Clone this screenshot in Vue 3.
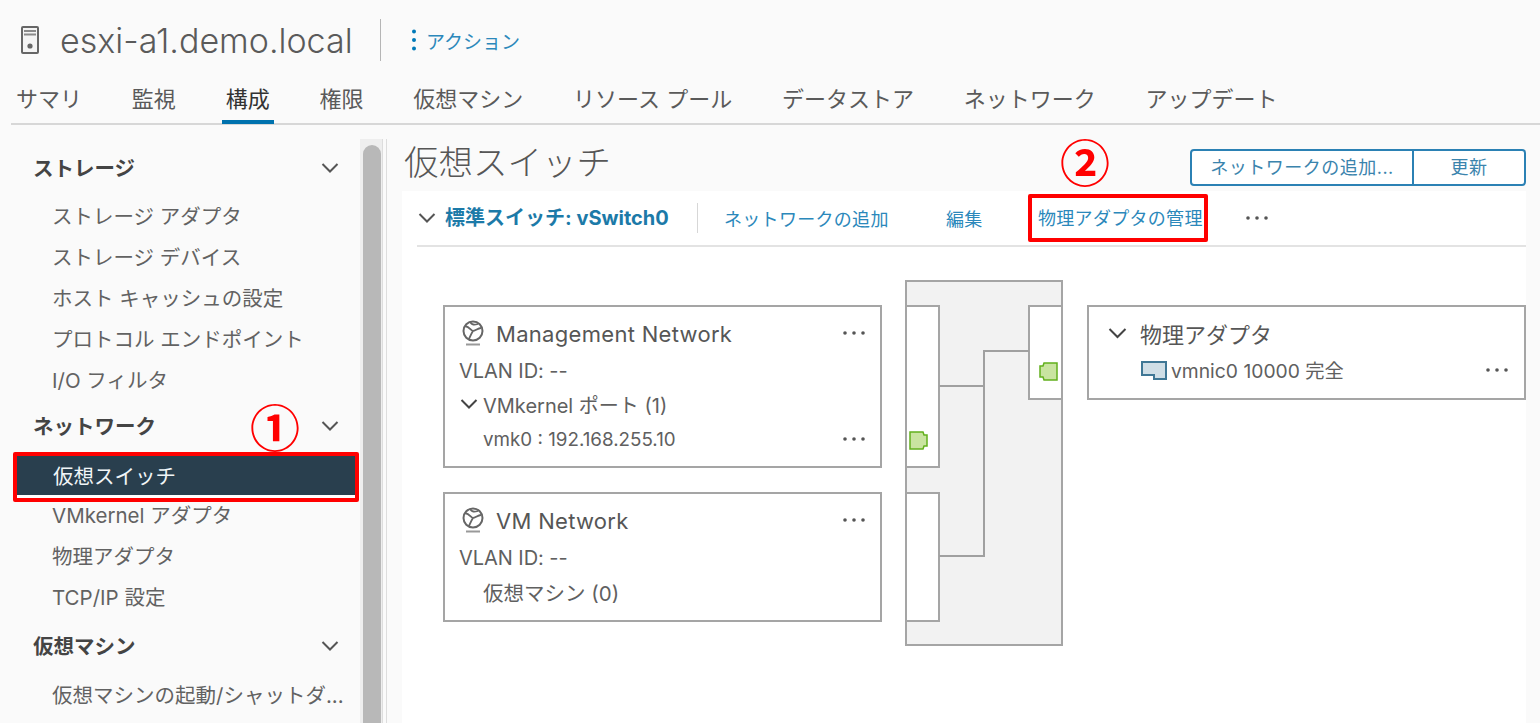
<script setup>
const tabs = ['サマリ', '監視', '構成', '権限', '仮想マシン', 'リソース プール', 'データストア', 'ネットワーク', 'アップデート']
const storage = ['ストレージ アダプタ', 'ストレージ デバイス', 'ホスト キャッシュの設定', 'プロトコル エンドポイント', 'I/O フィルタ']
const network = ['VMkernel アダプタ', '物理アダプタ', 'TCP/IP 設定']
</script>

<template>
  <div class="page">
    <header class="head">
      <svg class="srv" width="18" height="28" viewBox="0 0 18 28"><rect x="1" y="1" width="16" height="26" rx="1" fill="#f4f4f4" stroke="#666" stroke-width="2"/><path d="M3 5h12M3 8.500h12" stroke="#8a8a8a" stroke-width="2"/><circle cx="9" cy="20" r="2.600" fill="#666"/></svg>
      <h1 class="host">esxi-a1.demo.local</h1>
      <span class="vbar"></span>
      <svg class="kebab" width="6" height="24" viewBox="0 0 6 24"><circle cx="3" cy="3.500" r="2" fill="#0079b8"/><circle cx="3" cy="12" r="2" fill="#0079b8"/><circle cx="3" cy="20.500" r="2" fill="#0079b8"/></svg>
      <span class="action">アクション</span>
    </header>

    <nav class="tabs">
      <span v-for="t in tabs" :key="t" class="tab" :class="{ on: t === '構成' }">{{ t }}</span>
    </nav>

    <div class="body">
      <aside class="side">
        <div class="sec first">ストレージ<svg class="chev" width="18" height="10" viewBox="0 0 18 10"><path d="M1.500 1l7.500 7.500L16.500 1" fill="none" stroke="#555" stroke-width="2"/></svg></div>
        <div v-for="s in storage" :key="s" class="item">{{ s }}</div>
        <div class="sec net">ネットワーク<span class="mark one">①</span><svg class="chev" width="18" height="10" viewBox="0 0 18 10"><path d="M1.500 1l7.500 7.500L16.500 1" fill="none" stroke="#555" stroke-width="2"/></svg></div>
        <div class="selbox"><div class="sel">仮想スイッチ</div></div>
        <div v-for="s in network" :key="s" class="item">{{ s }}</div>
        <div class="sec vm">仮想マシン<svg class="chev" width="18" height="10" viewBox="0 0 18 10"><path d="M1.500 1l7.500 7.500L16.500 1" fill="none" stroke="#555" stroke-width="2"/></svg></div>
        <div class="item">仮想マシンの起動/シャットダ...</div>
      </aside>
      <div class="track"><div class="thumb"></div></div>

      <main class="main">
        <div class="top">
          <h2 class="title">仮想スイッチ</h2>
          <span class="mark two">②</span>
          <div class="btns">
            <button class="btn wide">ネットワークの追加...</button>
            <button class="btn">更新</button>
          </div>
        </div>

        <section class="panel">
          <div class="bar">
            <svg class="barchev" width="18" height="10" viewBox="0 0 18 10"><path d="M1.500 1l7.500 7.500L16.500 1" fill="none" stroke="#555" stroke-width="2"/></svg>
            <strong class="sw">標準スイッチ: vSwitch0</strong>
            <span class="vbar2"></span>
            <a class="lk l1">ネットワークの追加</a>
            <a class="lk l2">編集</a>
            <a class="lk boxed">物理アダプタの管理</a>
            <svg class="bardots" width="24" height="6" viewBox="0 0 24 6"><circle cx="3" cy="3" r="1.800" fill="#555"/><circle cx="12" cy="3" r="1.800" fill="#555"/><circle cx="21" cy="3" r="1.800" fill="#555"/></svg>
          </div>

          <div class="diagram">
            <div class="cards">
              <div class="card c1">
                <div class="ctitle">
                  <svg class="globe" width="24" height="26" viewBox="0 0 24 26"><ellipse cx="12" cy="11" rx="9.500" ry="9.500" fill="none" stroke="#666" stroke-width="2"/><path d="M4 6c5 1 6 5 8 5s5-3 8-3M12 11c-2 3-3 6-4 8M9 2c2 3 4 3 8 2" fill="none" stroke="#666" stroke-width="1.800"/><path d="M5 24.500h14" stroke="#999" stroke-width="2"/></svg>
                  <span class="nm">Management Network</span>
                  <svg class="dots" width="24" height="6" viewBox="0 0 24 6"><circle cx="3" cy="3" r="1.800" fill="#555"/><circle cx="12" cy="3" r="1.800" fill="#555"/><circle cx="21" cy="3" r="1.800" fill="#555"/></svg>
                </div>
                <div class="vlan">VLAN ID: --</div>
                <div class="port"><svg width="18" height="10" viewBox="0 0 18 10"><path d="M1.500 1l7.500 7.500L16.500 1" fill="none" stroke="#444" stroke-width="2"/></svg><span>VMkernel ポート (1)</span></div>
                <div class="vmk"><span>vmk0 : 192.168.255.10</span><svg class="dots" width="24" height="6" viewBox="0 0 24 6"><circle cx="3" cy="3" r="1.800" fill="#555"/><circle cx="12" cy="3" r="1.800" fill="#555"/><circle cx="21" cy="3" r="1.800" fill="#555"/></svg></div>
              </div>
              <div class="card c2">
                <div class="ctitle">
                  <svg class="globe" width="24" height="26" viewBox="0 0 24 26"><ellipse cx="12" cy="11" rx="9.500" ry="9.500" fill="none" stroke="#666" stroke-width="2"/><path d="M4 6c5 1 6 5 8 5s5-3 8-3M12 11c-2 3-3 6-4 8M9 2c2 3 4 3 8 2" fill="none" stroke="#666" stroke-width="1.800"/><path d="M5 24.500h14" stroke="#999" stroke-width="2"/></svg>
                  <span class="nm">VM Network</span>
                  <svg class="dots" width="24" height="6" viewBox="0 0 24 6"><circle cx="3" cy="3" r="1.800" fill="#555"/><circle cx="12" cy="3" r="1.800" fill="#555"/><circle cx="21" cy="3" r="1.800" fill="#555"/></svg>
                </div>
                <div class="vlan">VLAN ID: --</div>
                <div class="vms">仮想マシン (0)</div>
              </div>
            </div>

            <div class="switch">
              <div class="slot s1"></div>
              <div class="slot s2"></div>
              <div class="slot s3"></div>
              <svg class="wires" width="158" height="366" viewBox="0 0 158 366"><path d="M34 106h45M34 276h45V71h45" fill="none" stroke="#a0a0a0" stroke-width="2"/></svg>
              <svg class="pg p1" width="19" height="19" viewBox="0 0 19 19"><path d="M1 1h13l1 3h3v11h-3l-1 3H1z" fill="#c9e4a0" stroke="#62b01c" stroke-width="1.500"/></svg>
              <svg class="pg p2" width="19" height="19" viewBox="0 0 19 19"><path d="M18 1H5L4 4H1v11h3l1 3h13z" fill="#c9e4a0" stroke="#62b01c" stroke-width="1.500"/></svg>
            </div>

            <div class="card c3">
              <div class="ctitle pa">
                <svg width="19" height="11" viewBox="0 0 19 11"><path d="M1.500 1l8 8 8-8" fill="none" stroke="#444" stroke-width="2"/></svg>
                <span>物理アダプタ</span>
              </div>
              <div class="nic">
                <svg width="26" height="19" viewBox="0 0 26 19"><path d="M1 1h24v17H13v-4H1z" fill="#cfdee6" stroke="#3f7795" stroke-width="2"/></svg>
                <span>vmnic0 10000 完全</span>
                <svg class="dots" width="24" height="6" viewBox="0 0 24 6"><circle cx="3" cy="3" r="1.800" fill="#555"/><circle cx="12" cy="3" r="1.800" fill="#555"/><circle cx="21" cy="3" r="1.800" fill="#555"/></svg>
              </div>
            </div>
          </div>
        </section>
      </main>
    </div>
  </div>
</template>

<style>
html, body { margin: 0; background: #fafafa; overflow: hidden; }
</style>

<style scoped>
.page { width: 1540px; height: 723px; overflow: hidden; background: #fafafa; color: #565656; font-family: Inter, "Noto Sans CJK JP", sans-serif; }
.head { height: 80px; display: flex; align-items: center; padding-left: 21px; box-sizing: border-box; }
.srv { flex: none; }
.host { margin: 0 0 0 21px; font-size: 34px; font-weight: 300; color: #5a5a5a; width: 320px; white-space: nowrap; }
.vbar { width: 1px; height: 42px; background: #b5b5b5; }
.kebab { margin-left: 30px; }
.action { margin-left: 9px; font-size: 19px; color: #2b88bb; }
.tabs { height: 45px; box-sizing: border-box; margin-left: 11px; padding-left: 1px; display: flex; gap: 41.8px; border-bottom: 2px solid #d7d7d7; }
.tab { box-sizing: border-box; height: 44px; padding: 0 4px; font-size: 22px; line-height: 38px; color: #5a5a5a; white-space: nowrap; }
.tab.on { color: #333; border-bottom: 4px solid #0072ae; }
.body { display: flex; height: 598px; }
.side { width: 360px; flex: none; padding-top: 20px; box-sizing: border-box; }
.sec { position: relative; height: 48px; line-height: 48px; padding-left: 33px; font-size: 20.5px; font-weight: 700; color: #444; }
.first { margin-bottom: 3px; }
.chev { position: absolute; left: 321px; top: 18px; }
.net { margin-top: 2px; }
.vm { margin-top: 5px; margin-bottom: 4px; }
.item { height: 41px; line-height: 41px; padding-left: 52px; font-size: 20.5px; color: #626262; white-space: nowrap; }
.selbox { margin: 1px 0 -7px 13px; width: 346px; height: 50px; box-sizing: border-box; border: 4px solid #f00; border-radius: 2px; background: #fff; }
.sel { height: 39px; line-height: 42px; background: #293f4e; color: #f1f5f7; font-size: 20.5px; padding-left: 36px; overflow: hidden; }
.mark { position: absolute; color: #f00; font-weight: 700; font-size: 50px; line-height: 50px; font-family: "Noto Sans CJK JP", sans-serif; }
.one { left: 250px; top: -3px; }
.track { width: 23px; flex: none; margin-top: 14px; background: #eee; position: relative; border-right: 1px solid #ddd; box-sizing: border-box; }
.thumb { position: absolute; left: 3px; top: 6px; bottom: -20px; width: 18px; background: #b8b8b8; border-radius: 9px 9px 0 0; }
.main { margin-left: 3px; flex: 1; min-width: 0; border-left: 1px solid #ddd; margin-top: 14px; }
.top { position: relative; height: 52px; margin-right: 14px; display: flex; }
.title { margin: 0 0 0 17px; font-size: 34.5px; font-weight: 300; line-height: 48px; color: #565656; white-space: nowrap; }
.two { left: 673px; top: -4px; }
.btns { margin: 10px 0 0 auto; display: flex; height: 37px; }
.btn { font: inherit; font-size: 18px; letter-spacing: .5px; padding: 0 0 3px; height: 37px; background: #fff; color: #3b84ad; border: 2px solid #2b81b4; width: 114px; border-radius: 0 4px 4px 0; margin-left: -2px; }
.btn.wide { width: 224px; border-radius: 4px 0 0 4px; margin-left: 0; }
.panel { margin: 0 14px 0 15px; height: 560px; background: #fff; }
.bar { position: relative; margin-left: 15px; height: 54px; border-bottom: 2px solid #e3e3e3; display: flex; align-items: center; box-sizing: content-box; }
.barchev { margin-left: 1px; }
.sw { margin: 0 0 3px 9px; font-size: 20px; color: #1c7aa8; white-space: nowrap; width: 226px; font-weight: 700; }
.vbar2 { margin-left: 26px; width: 1px; height: 30px; background: #d7d7d7; }
.lk { font-size: 18px; letter-spacing: .3px; color: #2b88bb; white-space: nowrap; }
.l1 { margin-left: 26px; width: 165px; }
.l2 { margin-left: 57px; width: 36px; }
.boxed { margin-left: 46px; box-sizing: border-box; width: 180px; height: 48px; line-height: 42px; border: 4px solid #f00; border-radius: 2px; padding-left: 6px; }
.bardots { margin-left: 37px; }
.diagram { display: flex; align-items: flex-start; padding: 33px 0 0 41px; }
.cards { width: 439px; padding-top: 25px; display: flex; flex-direction: column; gap: 24px; flex: none; }
.card { box-sizing: border-box; background: #fff; border: 2px solid #a5a5a5; color: #606060; }
.c1 { height: 163px; padding: 3px 14px 0; }
.c2 { height: 130px; padding: 3px 14px 0; }
.c3 { width: 439px; height: 95px; margin: 25px 0 0 24px; padding: 3px 15px 0 19px; flex: none; }
.ctitle { height: 46px; display: flex; align-items: center; font-size: 22px; color: #565656; white-space: nowrap; }
.nm { letter-spacing: .3px; margin-left: -1px; margin-top: 2px; }
.globe { margin: 0 12px 0 2px; flex: none; }
.dots { margin-left: auto; flex: none; }
.vlan { height: 28px; line-height: 30px; font-size: 20px; letter-spacing: -.05px; }
.port { height: 40px; display: flex; align-items: center; font-size: 20px; gap: 5px; padding-left: 1px; }
.vmk { height: 30px; display: flex; align-items: center; font-size: 18.8px; padding-left: 24px; }
.vmk span { margin-top: 1px; }
.vms { height: 42px; line-height: 45px; font-size: 20.5px; padding-left: 24px; }
.pa { gap: 13px; }
.nic { display: flex; align-items: center; height: 28px; font-size: 19.3px; gap: 4px; padding-left: 33px; white-space: nowrap; }
.switch { position: relative; flex: none; width: 158px; height: 366px; margin-left: 23px; box-sizing: border-box; background: #f2f2f2; border: 2px solid #a5a5a5; }
.slot { position: absolute; background: #fff; border: 2px solid #a5a5a5; box-sizing: border-box; }
.s1 { left: -2px; top: 23px; width: 35px; height: 163px; }
.s2 { left: -2px; top: 210px; width: 35px; height: 130px; }
.s3 { right: -2px; top: 23px; width: 35px; height: 95px; }
.wires { position: absolute; left: -2px; top: -2px; }
.pg { position: absolute; }
.p1 { left: 2px; top: 149px; }
.p2 { right: 3px; top: 80px; }
</style>
